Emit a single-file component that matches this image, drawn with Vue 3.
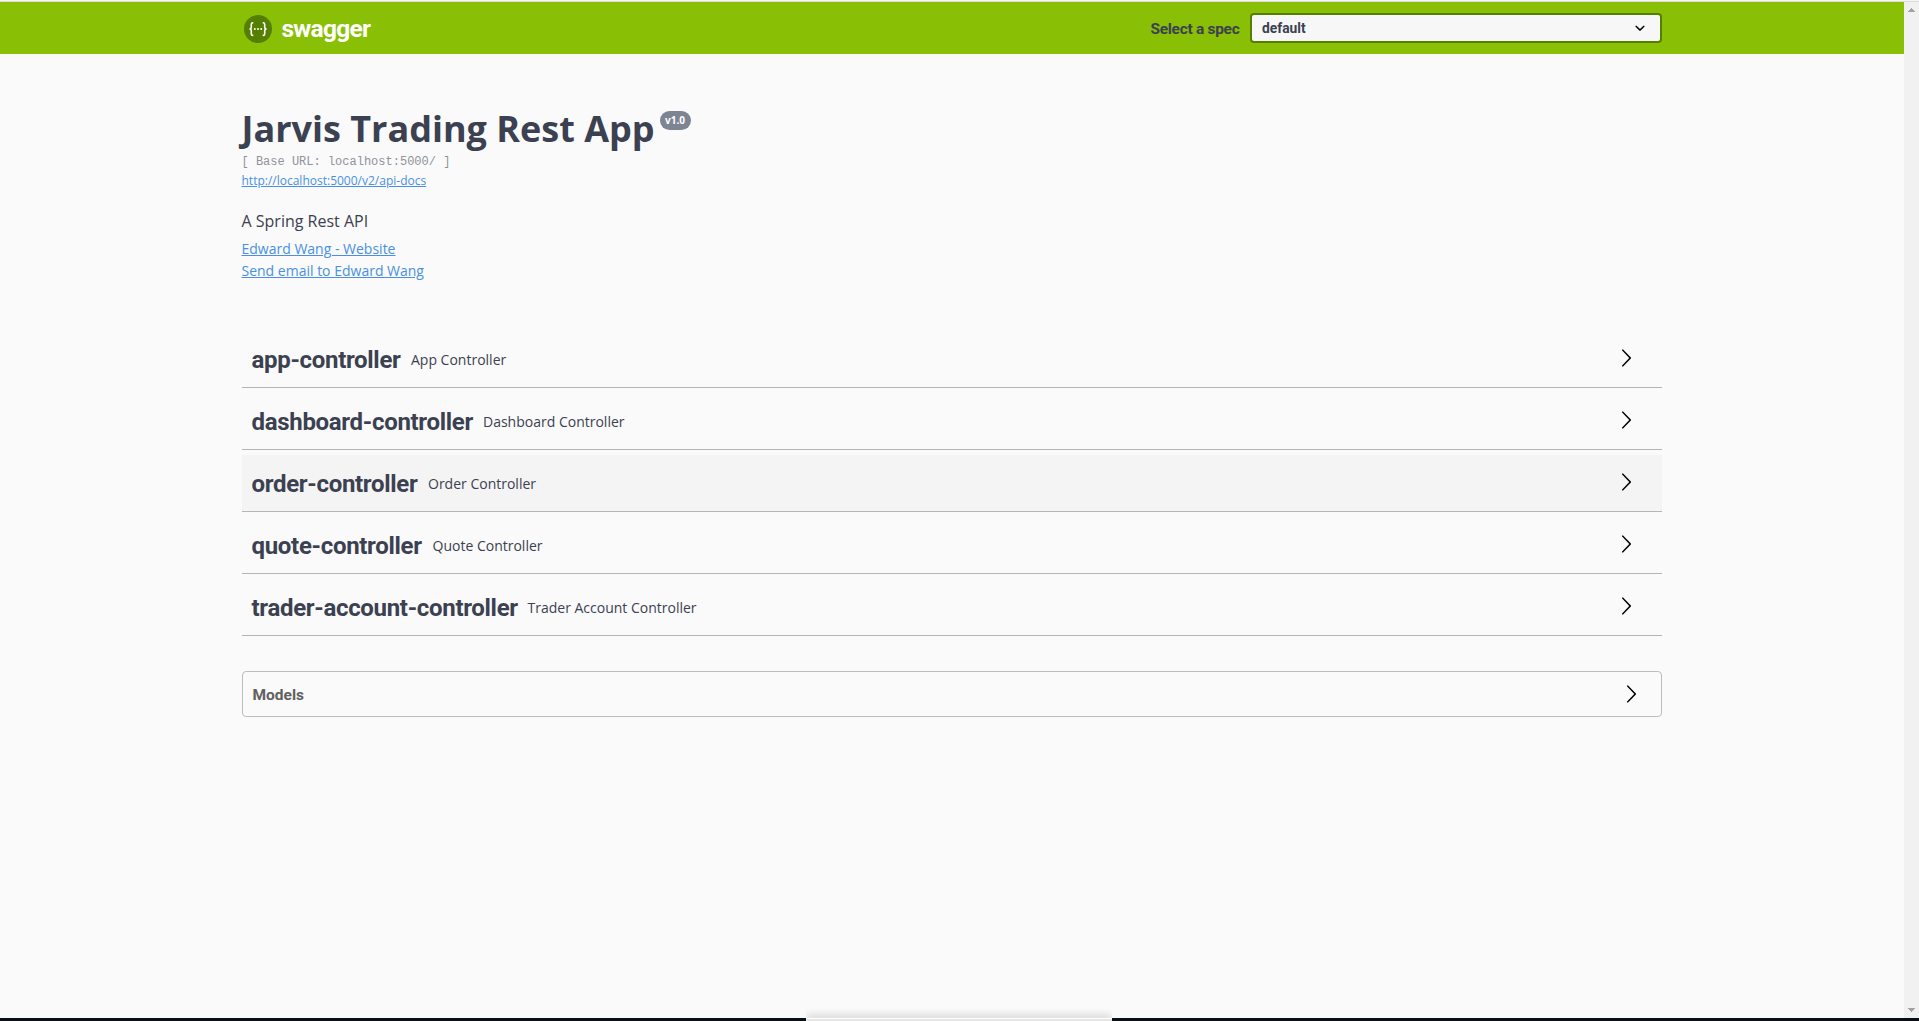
<script setup>
const controllers = [
  { name: 'app-controller', description: 'App Controller', width: 149.5 },
  { name: 'dashboard-controller', description: 'Dashboard Controller', width: 221.5 },
  { name: 'order-controller', description: 'Order Controller', width: 166.5 },
  { name: 'quote-controller', description: 'Quote Controller', width: 171 },
  { name: 'trader-account-controller', description: 'Trader Account Controller', width: 266 },
]
const arrow =
  'M13.25 10L6.109 2.58c-.268-.27-.268-.707 0-.979.268-.27.701-.27.969 0l7.83 7.908c.268.271.268.709 0 .979l-7.83 7.908c-.268.271-.701.27-.969 0-.268-.269-.268-.707 0-.979L13.25 10z'
</script>

<template>
  <div class="screen">
    <div class="view">
      <div class="page">
        <header class="topbar">
          <div class="wrapper bar">
            <a class="logo">
              <svg width="28" height="28" viewBox="0 0 28 28">
                <circle cx="14" cy="14" r="14" fill="#547f00" />
                <g fill="none" stroke="#fff" stroke-width="1.6">
                  <path d="M9.3 7.8H8.8Q7.3 7.8 7.3 9.3V12Q7.3 14 5.4 14Q7.3 14 7.3 16V18.9Q7.3 20.4 8.8 20.4H9.3" />
                  <path d="M18.7 7.8H19.2Q20.7 7.8 20.7 9.3V12Q20.7 14 22.6 14Q20.7 14 20.7 16V18.9Q20.7 20.4 19.2 20.4H18.7" />
                </g>
                <g fill="#fff">
                  <circle cx="10.8" cy="14.1" r="1" />
                  <circle cx="14" cy="14.1" r="1" />
                  <circle cx="17.2" cy="14.1" r="1" />
                </g>
              </svg>
              <span class="brand">swagger</span>
            </a>
            <label class="spec">
              <span class="spec-label">Select a spec</span>
              <span class="select">
                <span class="select-value">default</span>
                <svg width="20" height="20" viewBox="0 0 20 20">
                  <path d="M13.418 7.859c.271-.268.709-.268.978 0 .27.268.272.701 0 .969l-3.908 3.83c-.27.268-.707.268-.979 0l-3.908-3.83c-.27-.267-.27-.701 0-.969.271-.268.709-.268.978 0L10 11l3.418-3.141z" />
                </svg>
              </span>
            </label>
          </div>
        </header>

        <main class="wrapper">
          <section class="info">
            <h1 class="title">Jarvis Trading Rest App<span class="version">v1.0</span></h1>
            <div class="base">[ Base URL: localhost:5000/ ]</div>
            <a class="docs">http://localhost:5000/v2/api-docs</a>
            <p class="about">A Spring Rest API</p>
            <a class="contact">Edward Wang - Website</a>
            <a class="contact">Send email to Edward Wang</a>
          </section>

          <section class="tags">
            <div
              v-for="(c, i) in controllers"
              :key="c.name"
              class="tag"
              :class="{ hovered: i === 2 }"
            >
              <h2 class="tag-name" :style="{ width: c.width + 'px' }">{{ c.name }}</h2>
              <span class="tag-desc">{{ c.description }}</span>
              <svg class="arrow" width="20" height="20" viewBox="0 0 20 20"><path :d="arrow" /></svg>
            </div>
          </section>

          <section class="models">
            <h3 class="models-title">Models</h3>
            <svg width="20" height="20" viewBox="0 0 20 20"><path :d="arrow" /></svg>
          </section>
        </main>
      </div>
      <div class="scrollbar">
        <svg width="7" height="4" viewBox="0 0 7 4" shape-rendering="crispEdges"><path d="M3 0h1v1h1v1h1v1h1v1H0V3h1V2h1V1h1z" /></svg>
        <svg width="7" height="4" viewBox="0 0 7 4" shape-rendering="crispEdges"><path d="M0 0h7v1H6v1H5v1H4v1H3V3H2V2H1V1H0z" /></svg>
      </div>
    </div>
    <div class="desktop"><div class="panel"></div></div>
  </div>
</template>

<style>
body {
  background: #fafafa;
  overflow: hidden;
}
</style>

<style scoped>
.screen {
  display: flex;
  flex-direction: column;
  height: 1021px;
  box-sizing: border-box;
  border-top: 1px solid #f5f5f5;
  font-family: 'Open Sans', sans-serif;
  color: #3b4151;
  overflow: hidden;
}
.view {
  display: flex;
  flex: 1;
  border-top: 1px solid #dcdcdc;
}
.page {
  flex: 1;
  background: #fafafa;
}
.scrollbar {
  width: 15px;
  box-sizing: border-box;
  padding: 6px 4px 6px;
  display: flex;
  flex-direction: column;
  justify-content: space-between;
  background: #f1f1f1;
  fill: #a3a3a3;
}
.wrapper {
  width: 1420px;
  margin: 0 0 0 241.5px;
}
.topbar {
  height: 52px;
  background: #89bf04;
}
.bar {
  height: 52px;
  display: flex;
  align-items: center;
  justify-content: space-between;
  font-family: Roboto, sans-serif;
  font-weight: 700;
}
.logo {
  display: flex;
  align-items: center;
  padding: 2px 0 0 2px;
}
.brand {
  margin-left: 10px;
  font-size: 24.5px;
  line-height: 28px;
  letter-spacing: -0.75px;
  color: #fff;
}
.spec {
  display: flex;
  align-items: center;
}
.spec-label {
  width: 89px;
  margin-right: 10px;
  padding-top: 1px;
  font-size: 15.5px;
  line-height: 24px;
  white-space: nowrap;
  letter-spacing: -0.3px;
}
.select {
  width: 412px;
  height: 30px;
  box-sizing: border-box;
  display: flex;
  align-items: center;
  justify-content: space-between;
  padding: 0 10px;
  border: 2px solid #547f00;
  border-radius: 4px;
  background: #f7f7f7;
}
.select-value {
  padding-left: 0.5px;
  font-size: 13.8px;
  line-height: 20px;
}
.info {
  display: flex;
  flex-direction: column;
  align-items: flex-start;
  padding-top: 53px;
}
.title {
  display: flex;
  align-items: flex-start;
  margin: 0;
  font-size: 36px;
  font-weight: 700;
  line-height: 44px;
}
.version {
  margin: 4px 0 0 5px;
  width: 31px;
  height: 19px;
  border-radius: 10px;
  background: #7d8492;
  color: #fff;
  font-size: 10px;
  line-height: 19px;
  text-align: center;
}
.base {
  margin-top: 2px;
  font-family: 'Liberation Mono', monospace;
  font-size: 12px;
  line-height: 18px;
  color: #8f939c;
}
.docs,
.contact {
  color: #4990e2;
  text-decoration: underline;
}
.docs {
  margin-top: 1px;
  font-size: 12px;
  line-height: 18px;
}
.about {
  margin: 19px 0 5px;
  font-size: 16px;
  line-height: 24px;
}
.contact {
  font-size: 14px;
  line-height: 22px;
}
.tags {
  margin-top: 49px;
}
.tag {
  display: flex;
  align-items: center;
  height: 56px;
  margin-bottom: 5px;
  padding: 0 26px 0 10px;
  border-bottom: 1px solid #b4b5b9;
}
.hovered {
  background: #f4f4f4;
}
.tag-name {
  margin: 0 10px 0 0;
  padding-top: 2px;
  font-family: Roboto, sans-serif;
  font-size: 24px;
  font-weight: 700;
  line-height: 30px;
  letter-spacing: -0.31px;
  white-space: nowrap;
}
.tag-desc {
  flex: 1;
  padding-top: 2px;
  font-size: 14px;
  line-height: 20px;
}
.arrow {
  margin-bottom: 2px;
}
.models {
  display: flex;
  align-items: center;
  justify-content: space-between;
  height: 46px;
  box-sizing: border-box;
  margin-top: 35px;
  padding: 0 20px 0 10px;
  border: 1px solid #bbbcc0;
  border-radius: 4px;
}
.models-title {
  margin: 0;
  padding-top: 2px;
  font-family: Roboto, sans-serif;
  font-size: 15.5px;
  font-weight: 700;
  line-height: 24px;
  color: #606060;
}
.desktop {
  display: flex;
  height: 3px;
  padding-left: 806px;
  background: #0a0e17;
}
.panel {
  width: 306px;
  height: 2px;
  border-top: 1px solid #fff;
  background: #e6e6e6;
  box-shadow: 0 -1px 8px 0 rgba(0, 0, 0, 0.35);
  clip-path: inset(-12px 0 0 0);
}
</style>
